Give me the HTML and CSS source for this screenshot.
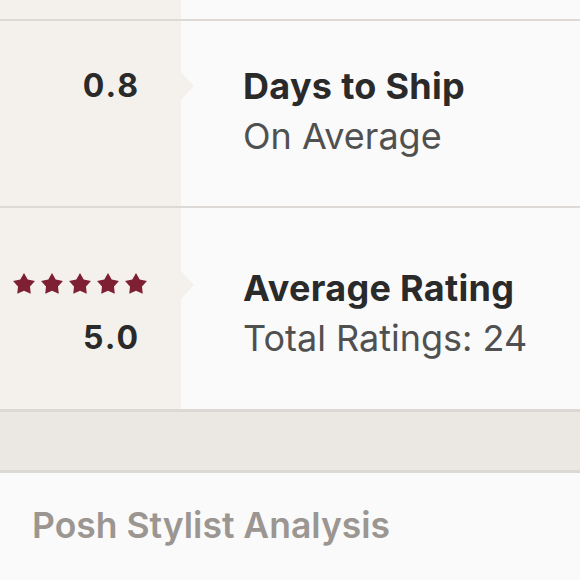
FILE: index.html
```html
<!DOCTYPE html>
<html>
<head>
<meta charset="utf-8">
<link rel="stylesheet" href="styles.css">
</head>
<body>
<div class="stats">
  <div class="row row-stub">
    <div class="left"></div>
    <div class="right"></div>
  </div>
  <div class="row row-ship">
    <div class="left">
      <div class="line num">0.8</div>
      <div class="line"></div>
    </div>
    <div class="right">
      <div class="line title">Days to Ship</div>
      <div class="line sub">On Average</div>
    </div>
  </div>
  <div class="row row-rating">
    <div class="left">
      <div class="line stars">
        <svg class="star" viewBox="0 0 24 24"><path d="M12 1L15.7 7.4L22.94 8.95L17.99 14.45L18.76 21.8L12 18.8L5.24 21.8L6.01 14.45L1.06 8.95L8.3 7.4Z"/></svg>
        <svg class="star" viewBox="0 0 24 24"><path d="M12 1L15.7 7.4L22.94 8.95L17.99 14.45L18.76 21.8L12 18.8L5.24 21.8L6.01 14.45L1.06 8.95L8.3 7.4Z"/></svg>
        <svg class="star" viewBox="0 0 24 24"><path d="M12 1L15.7 7.4L22.94 8.95L17.99 14.45L18.76 21.8L12 18.8L5.24 21.8L6.01 14.45L1.06 8.95L8.3 7.4Z"/></svg>
        <svg class="star" viewBox="0 0 24 24"><path d="M12 1L15.7 7.4L22.94 8.95L17.99 14.45L18.76 21.8L12 18.8L5.24 21.8L6.01 14.45L1.06 8.95L8.3 7.4Z"/></svg>
        <svg class="star" viewBox="0 0 24 24"><path d="M12 1L15.7 7.4L22.94 8.95L17.99 14.45L18.76 21.8L12 18.8L5.24 21.8L6.01 14.45L1.06 8.95L8.3 7.4Z"/></svg>
      </div>
      <div class="line num">5.0</div>
    </div>
    <div class="right">
      <div class="line title">Average Rating</div>
      <div class="line sub">Total Ratings: 24</div>
    </div>
  </div>
</div>
<div class="band"></div>
<div class="analysis">
  <h2 class="analysis-title">Posh Stylist Analysis</h2>
</div>
</body>
</html>
```
FILE: styles.css
```css
html, body {
  margin: 0;
  padding: 0;
  background: #fafafa;
  font-family: Inter, "Liberation Sans", sans-serif;
}

.stats {
  display: flex;
  flex-direction: column;
}

.row {
  display: flex;
}

.row + .row {
  border-top: 2px solid #dcd9d6;
}

.left {
  width: 181px;
  flex: none;
  box-sizing: border-box;
  background: #f4f1ed;
  display: flex;
  flex-direction: column;
  align-items: flex-end;
  padding-right: 43px;
}

.right {
  flex: 1;
  position: relative;
  padding-left: 62px;
  display: flex;
  flex-direction: column;
}

.row-stub {
  height: 19px;
}

.row-ship .left,
.row-ship .right {
  padding-top: 40px;
  padding-bottom: 45px;
}

.row-rating .left,
.row-rating .right {
  padding-top: 55px;
  padding-bottom: 46px;
}

.row-ship .right::before,
.row-rating .right::before {
  content: "";
  position: absolute;
  left: 0;
  width: 0;
  height: 0;
  border-left: 13px solid #f4f1ed;
  border-top: 14px solid transparent;
  border-bottom: 14px solid transparent;
}

.row-ship .right::before {
  top: 51px;
}

.row-rating .right::before {
  top: 63px;
}

.line {
  height: 50px;
  line-height: 50px;
  white-space: nowrap;
}

.num {
  font-size: 32px;
  font-weight: 700;
  letter-spacing: 2px;
  margin-right: -2px;
  color: #2a2a2a;
}

.title {
  font-size: 36px;
  font-weight: 700;
  letter-spacing: 0.3px;
  color: #2a2a2a;
}

.sub {
  font-size: 36px;
  font-weight: 400;
  color: #505050;
}

.stars {
  display: flex;
  align-items: flex-start;
  box-sizing: border-box;
  padding-top: 9px;
  gap: 4px;
  margin-right: -10px;
}

.star {
  width: 24px;
  height: 24px;
  fill: #7e1f33;
}

.band {
  height: 58px;
  background-color: #ebe8e4;
  border-top: 3px solid #dcd8d4;
  border-bottom: 3px solid #dcd8d4;
}

.analysis {
  padding: 33px 32px 0;
}

.analysis-title {
  margin: 0;
  font-size: 35.5px;
  line-height: 40px;
  font-weight: 600;
  color: #9b9691;
}
```
